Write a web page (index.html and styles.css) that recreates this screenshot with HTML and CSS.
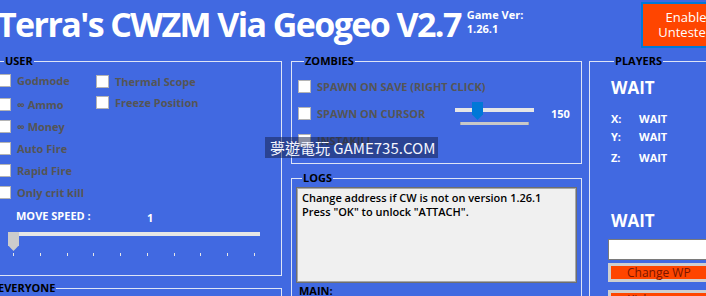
FILE: index.html
```html
<!DOCTYPE html>
<html lang="en">
<head>
  <meta charset="UTF-8">
  <title>Terra's CWZM Via Geogeo</title>
  <link rel="stylesheet" href="styles.css">
</head>
<body>
  <header class="top">
    <h1 class="title">Terra's CWZM Via Geogeo V2.7</h1>
    <div class="gamever">Game Ver:<br>1.26.1</div>
    <button type="button" class="enable">Enable<br>Untested</button>
  </header>

  <main class="panels">
    <div class="col left">
      <fieldset class="group user">
        <legend>USER</legend>
        <div class="checks">
          <div class="checkcol first">
            <label class="check"><span class="box"></span>Godmode</label>
            <label class="check"><span class="box"></span>∞ Ammo</label>
            <label class="check"><span class="box"></span>∞ Money</label>
            <label class="check"><span class="box"></span>Auto Fire</label>
            <label class="check"><span class="box"></span>Rapid Fire</label>
            <label class="check"><span class="box"></span>Only crit kill</label>
          </div>
          <div class="checkcol second">
            <label class="check"><span class="box"></span>Thermal Scope</label>
            <label class="check"><span class="box"></span>Freeze Position</label>
          </div>
        </div>
        <div class="speed"><span class="speedlabel">MOVE SPEED :</span><span class="speedval">1</span></div>
        <div class="slider">
          <div class="track"></div>
          <div class="thumb"></div>
        </div>
        <div class="ticks">
          <i></i><i></i><i></i><i></i><i></i><i></i><i></i><i></i><i></i><i></i>
        </div>
      </fieldset>
      <fieldset class="group everyone">
        <legend>EVERYONE</legend>
      </fieldset>
    </div>

    <div class="col mid">
      <fieldset class="group zombies">
        <legend>ZOMBIES</legend>
        <div class="zrow">
          <label class="check"><span class="box"></span>SPAWN ON SAVE (RIGHT CLICK)</label>
        </div>
        <div class="zrow">
          <label class="check cursor"><span class="box"></span>SPAWN ON CURSOR</label>
          <div class="zslider">
            <div class="ztrack"></div>
            <div class="zthumb"></div>
            <div class="zbar"></div>
          </div>
          <span class="zval">150</span>
        </div>
        <div class="zrow">
          <label class="check"><span class="box"></span>INSTAKILL</label>
        </div>
      </fieldset>
      <fieldset class="group logs">
        <legend>LOGS</legend>
        <div class="logbox">
          Change address if CW is not on version 1.26.1<br>
          Press "OK" to unlock "ATTACH".
        </div>
        <div class="main-label">MAIN:</div>
      </fieldset>
    </div>

    <div class="col right">
      <fieldset class="group players">
        <legend>PLAYERS</legend>
        <div class="wait big">WAIT</div>
        <div class="coords">
          <span>X:</span><span>WAIT</span>
          <span>Y:</span><span>WAIT</span>
          <span class="z">Z:</span><span class="z">WAIT</span>
        </div>
        <div class="wait big second">WAIT</div>
        <input type="text" class="wpinput">
        <button type="button" class="wpbtn">Change WP</button>
        <button type="button" class="wpbtn">Kick</button>
      </fieldset>
    </div>
  </main>

  <div class="watermark">夢遊電玩 GAME735.COM</div>
</body>
</html>
```

FILE: styles.css
```css
*{
  margin: 0; padding: 0;
  box-sizing: border-box;
}

body{
  width: 706px; height: 296px;
  overflow: hidden; position: relative;
  background: #4169e1;
  font-family: "Open Sans", "Noto Sans", sans-serif;
}

/* 상단 */
.top{
  display: flex; align-items: flex-start;
  height: 55px;
}
.title{
  font-size: 34px; font-weight: 700; line-height: 46px;
  letter-spacing: -1.6px;
  color: #fff; white-space: nowrap;
  margin: 1px 0 0 -3px;
}
.gamever{
  font-size: 11px; font-weight: 700; line-height: 14px;
  color: #fff;
  margin: 8px 0 0 6px;
}
.enable{
  flex: none;
  width: 90px; height: 46px;
  margin: 2px -25px 0 auto;
  background: #ff4500;
  border: 2px solid #0078d7;
  color: #fff;
  font: 13px/15px "Open Sans", sans-serif;
}

/* 패널 */
.panels{
  display: flex; align-items: flex-start;
  margin-left: -10px;
}
.col{
  display: flex; flex-direction: column;
  flex: none;
}
.col.left{ width: 292px; }
.col.mid{ width: 291px; margin-left: 9px; }
.col.right{ width: 140px; margin-left: 7px; }

.group{
  border: 1px solid #dde4f6;
  min-width: 0;
}
.group legend{
  font-size: 11px; font-weight: 700; line-height: 12px;
  color: #000;
  margin-left: 6px; padding: 0 1px;
}

/* 체크박스 */
.check{
  display: flex; align-items: center;
  height: 13px; gap: 6px;
  font-size: 11px; font-weight: 700;
  color: #555;
  white-space: nowrap;
}
.box{
  flex: none;
  width: 13px; height: 13px;
  background: #fff;
  border: 1px solid #b4b4b4;
}

/* USER */
.user{
  height: 221px;
  padding: 7px 0 0 7px;
}
.checks{ display: flex; }
.checkcol{
  display: flex; flex-direction: column;
  gap: 9px;
}
.checkcol.first{ width: 98px; }
.checkcol.first .check:first-child{ margin-bottom: 2px; }
.checkcol.second{ gap: 8px; margin-top: 1px; }

.speed{
  display: flex;
  margin: 10px 0 0 18px;
  font-size: 11px; font-weight: 700; line-height: 14px;
  color: #fff;
}
.speedlabel{ width: 131px; }
.speedval{ padding-top: 2px; }

.slider{
  position: relative;
  width: 252px; height: 19px;
  margin: 7px 0 0 10px;
}
.track{
  width: 242px; height: 4px;
  margin: 6px 0 0 10px;
  background: #e6e6e6;
}
.thumb{
  position: absolute; left: 0; top: 0;
  width: 11px; height: 19px;
  background: #cccccc;
  clip-path: polygon(0 0, 100% 0, 100% 70%, 50% 100%, 0 70%);
}
.ticks{
  display: flex; justify-content: space-between;
  width: 242px; height: 3px;
  margin: 2px 0 0 15px;
}
.ticks i{
  width: 1px; height: 3px;
  background: #e6e6e6;
}

.everyone{
  height: 40px;
  margin-top: 6px;
}

/* ZOMBIES */
.zombies{
  height: 109px;
  padding: 13px 0 0 6px;
  display: flex; flex-direction: column;
  gap: 14px;
}
.zrow{
  display: flex; align-items: flex-start;
  height: 13px;
}
.check.cursor{ width: 157px; }
.zslider{
  position: relative;
  width: 79px;
}
.ztrack{
  height: 4px; margin-top: 1px;
  background: #e6e6e6;
}
.zthumb{
  position: absolute; left: 17px; top: -5px;
  width: 11px; height: 18px;
  background: #0078d7;
  clip-path: polygon(0 0, 100% 0, 100% 70%, 50% 100%, 0 70%);
}
.zbar{
  width: 69px; height: 3px;
  margin: 10px 0 0 5px;
  background: #c8c8c8;
  border-left: 1px solid #aaa; border-right: 1px solid #aaa;
}
.zval{
  margin-left: 17px;
  font-size: 11px; font-weight: 700; line-height: 13px;
  color: #fff;
}

/* LOGS */
.logs{
  height: 130px;
  margin-top: 8px;
  padding: 3px 4px 0 4px;
}
.logbox{
  height: 96px;
  background: #f0f0f0;
  border: 1px solid #6f6f6f;
  box-shadow: inset 0 0 0 1px #a8a8a8;
  padding: 3px 5px;
  font-size: 11px; font-weight: 600; line-height: 14px;
  color: #000;
}
.main-label{
  margin: 1px 0 0 3px;
  font-size: 11px; font-weight: 700; line-height: 14px;
  color: #000;
}

/* PLAYERS */
.players{
  height: 260px;
  padding: 0 0 0 18px;
  color: #fff;
}
.wait.big{
  font-size: 17px; font-weight: 700; line-height: 20px;
  margin: 11px 0 0 3px;
}
.coords{
  display: grid;
  grid-template-columns: 28px auto;
  margin: 12px 0 0 3px;
  font-size: 11px; font-weight: 700; line-height: 18px;
}
.coords .z{ margin-top: 3px; }
.wait.big.second{ margin-top: 44px; }
.wpinput{
  display: block;
  width: 130px; height: 21px;
  margin-top: 8px;
  background: #fff;
  border: 1px solid #7a7a7a;
}
.wpbtn{
  display: block;
  width: 130px; height: 19px;
  margin-top: 3px;
  background: #ff4500;
  border: 3px solid #cfcfcf;
  color: #7a1600;
  font: 12px/13px "Open Sans", sans-serif;
  text-align: left; padding-left: 16px;
}
.wpbtn + .wpbtn{ margin-top: 8px; }

/* 워터마크 */
.watermark{
  position: absolute;
  left: 265px; top: 137px;
  width: 173px; height: 21px;
  background: rgba(20, 30, 70, 0.5);
  color: #f4f6ff;
  font: 15px/21px "Noto Sans CJK TC", "Noto Sans", sans-serif;
  padding-left: 5px;
  white-space: nowrap;
}
```
